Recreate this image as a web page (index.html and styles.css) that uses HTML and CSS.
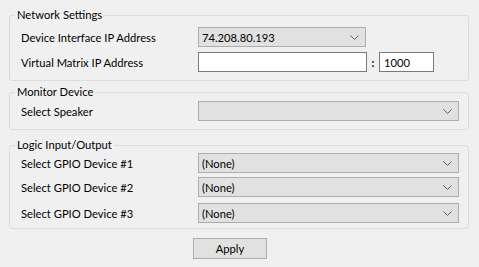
FILE: index.html
```html
<!DOCTYPE html>
<html lang="en">
<head>
    <meta charset="UTF-8">
    <meta name="viewport" content="width=device-width, initial-scale=1.0">
    <title>Settings</title>
    <link rel="stylesheet" href="styles.css">
</head>
<body>

    <fieldset class="group group-network">
        <legend>Network Settings</legend>
        <div class="row row-first">
            <label>Device Interface IP Address</label>
            <div class="combo combo-short">
                <span>74.208.80.193</span>
                <svg class="chevron" width="9" height="5" viewBox="0 0 9 5"><path d="M0.5 0.5 L4.5 4.5 L8.5 0.5" fill="none" stroke="#606060" stroke-width="1"/></svg>
            </div>
        </div>
        <div class="row">
            <label>Virtual Matrix IP Address</label>
            <div class="address">
                <input type="text" class="text-ip" value="">
                <span class="colon">:</span>
                <input type="text" class="text-port" value="1000">
            </div>
        </div>
    </fieldset>

    <fieldset class="group group-monitor">
        <legend>Monitor Device</legend>
        <div class="row row-first">
            <label>Select Speaker</label>
            <div class="combo">
                <span></span>
                <svg class="chevron" width="9" height="5" viewBox="0 0 9 5"><path d="M0.5 0.5 L4.5 4.5 L8.5 0.5" fill="none" stroke="#606060" stroke-width="1"/></svg>
            </div>
        </div>
    </fieldset>

    <fieldset class="group group-logic">
        <legend>Logic Input/Output</legend>
        <div class="row row-first">
            <label>Select GPIO Device #1</label>
            <div class="combo">
                <span>(None)</span>
                <svg class="chevron" width="9" height="5" viewBox="0 0 9 5"><path d="M0.5 0.5 L4.5 4.5 L8.5 0.5" fill="none" stroke="#606060" stroke-width="1"/></svg>
            </div>
        </div>
        <div class="row row-gpio2">
            <label>Select GPIO Device #2</label>
            <div class="combo">
                <span>(None)</span>
                <svg class="chevron" width="9" height="5" viewBox="0 0 9 5"><path d="M0.5 0.5 L4.5 4.5 L8.5 0.5" fill="none" stroke="#606060" stroke-width="1"/></svg>
            </div>
        </div>
        <div class="row row-gpio3">
            <label>Select GPIO Device #3</label>
            <div class="combo">
                <span>(None)</span>
                <svg class="chevron" width="9" height="5" viewBox="0 0 9 5"><path d="M0.5 0.5 L4.5 4.5 L8.5 0.5" fill="none" stroke="#606060" stroke-width="1"/></svg>
            </div>
        </div>
    </fieldset>

    <div class="actions">
        <button>Apply</button>
    </div>

</body>
</html>
```

FILE: styles.css
```css
body {
    margin: 0;
    padding-top: 8px;
    background-color: #f0f0f0;
    font-family: Lato, "Noto Sans", sans-serif;
    font-size: 11.2px;
    color: #000000;
}

.group {
    margin: 0 10px 0 9px;
    padding: 0 0 8px 11px;
    border: 1px solid #dcdcdc;
    border-radius: 3px;
    min-width: 0;
}

.group legend {
    margin-left: -6px;
    padding: 0 2px;
    line-height: 14px;
    height: 14px;
}

.group-monitor {
    margin-top: 4px;
}

.group-logic {
    margin-top: 8px;
    padding-bottom: 5px;
}

.row {
    display: flex;
    align-items: center;
    height: 20px;
    margin-top: 5px;
}

.group-monitor .row-first {
    margin-top: 2px;
}

.group-logic .row-first {
    margin-top: 1px;
}

.row-gpio2 {
    margin-top: 4px;
}

.row-gpio3 {
    margin-top: 6px;
}

.row label {
    width: 177px;
    flex-shrink: 0;
}

.combo {
    display: flex;
    align-items: center;
    justify-content: space-between;
    box-sizing: border-box;
    width: 261px;
    height: 20px;
    padding: 0 6px 0 3px;
    background-color: #e1e1e1;
    border: 1px solid #adadad;
}

.combo-short {
    width: 168px;
}

.chevron {
    display: block;
}

.address {
    display: flex;
    align-items: center;
}

input {
    box-sizing: border-box;
    height: 20px;
    margin: 0;
    padding: 0 4px;
    border: 1px solid #7a7a7a;
    background-color: #ffffff;
    font-family: inherit;
    font-size: 11.2px;
    outline: none;
}

.text-ip {
    width: 169px;
}

.colon {
    width: 12px;
    text-align: center;
    font-weight: bold;
}

.text-port {
    width: 55px;
}

.actions {
    margin-top: 9px;
    padding-left: 193px;
}

button {
    box-sizing: border-box;
    width: 74px;
    height: 21px;
    padding: 0;
    background-color: #e1e1e1;
    border: 1px solid #adadad;
    font-family: inherit;
    font-size: 11.2px;
    color: #000000;
}
```
